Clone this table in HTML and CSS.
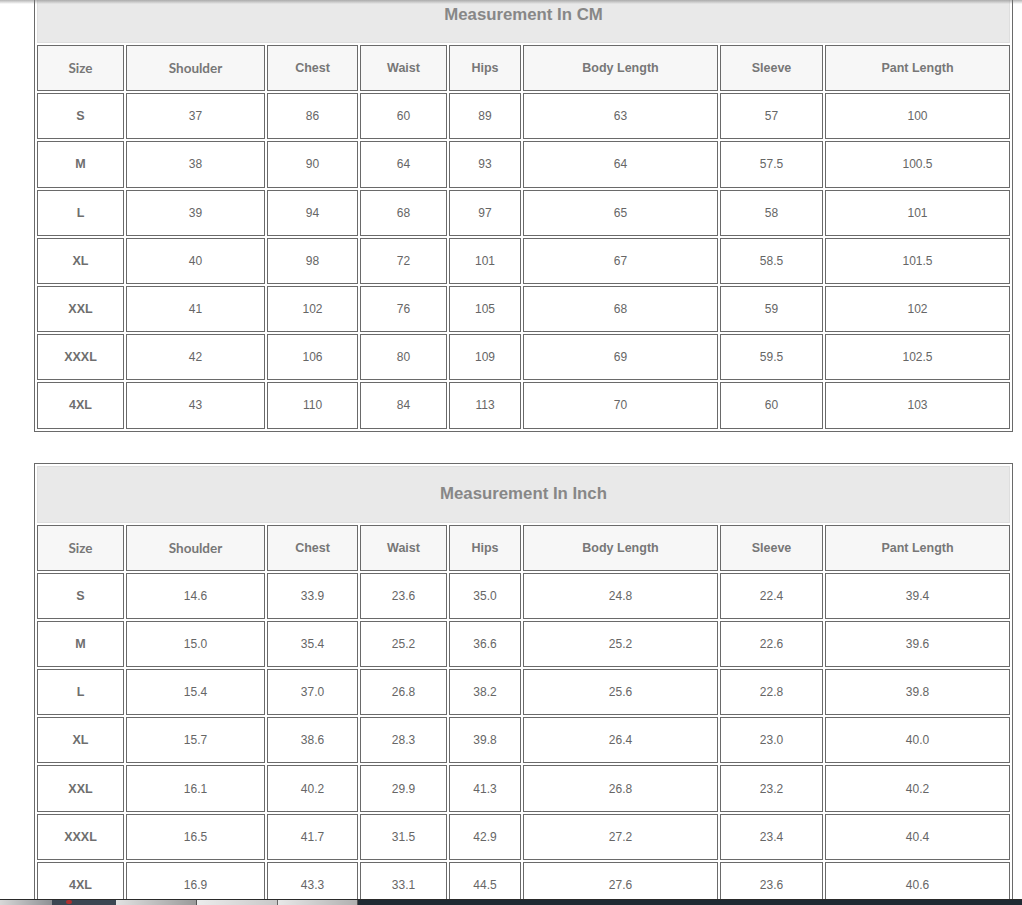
FILE: index.html
```html
<!DOCTYPE html>
<html>
<head>
<meta charset="utf-8">
<title>Size Chart</title>
<link rel="stylesheet" href="styles.css">
</head>
<body>
<div class="page">
  <table class="chart">
    <tr><td class="title" colspan="8">Measurement In CM</td></tr>
    <tr class="head">
      <th class="c-size alt">Size</th><th class="c-shoulder alt">Shoulder</th><th class="c-chest">Chest</th><th class="c-waist">Waist</th><th class="c-hips">Hips</th><th class="c-body">Body Length</th><th class="c-sleeve">Sleeve</th><th class="c-pant">Pant Length</th>
    </tr>
    <tr><td class="sz">S</td><td>37</td><td>86</td><td>60</td><td>89</td><td>63</td><td>57</td><td>100</td></tr>
    <tr><td class="sz">M</td><td>38</td><td>90</td><td>64</td><td>93</td><td>64</td><td>57.5</td><td>100.5</td></tr>
    <tr><td class="sz">L</td><td>39</td><td>94</td><td>68</td><td>97</td><td>65</td><td>58</td><td>101</td></tr>
    <tr><td class="sz">XL</td><td>40</td><td>98</td><td>72</td><td>101</td><td>67</td><td>58.5</td><td>101.5</td></tr>
    <tr><td class="sz">XXL</td><td>41</td><td>102</td><td>76</td><td>105</td><td>68</td><td>59</td><td>102</td></tr>
    <tr><td class="sz">XXXL</td><td>42</td><td>106</td><td>80</td><td>109</td><td>69</td><td>59.5</td><td>102.5</td></tr>
    <tr><td class="sz">4XL</td><td>43</td><td>110</td><td>84</td><td>113</td><td>70</td><td>60</td><td>103</td></tr>
  </table>

  <table class="chart">
    <tr><td class="title" colspan="8">Measurement In Inch</td></tr>
    <tr class="head">
      <th class="c-size alt">Size</th><th class="c-shoulder alt">Shoulder</th><th class="c-chest">Chest</th><th class="c-waist">Waist</th><th class="c-hips">Hips</th><th class="c-body">Body Length</th><th class="c-sleeve">Sleeve</th><th class="c-pant">Pant Length</th>
    </tr>
    <tr><td class="sz">S</td><td>14.6</td><td>33.9</td><td>23.6</td><td>35.0</td><td>24.8</td><td>22.4</td><td>39.4</td></tr>
    <tr><td class="sz">M</td><td>15.0</td><td>35.4</td><td>25.2</td><td>36.6</td><td>25.2</td><td>22.6</td><td>39.6</td></tr>
    <tr><td class="sz">L</td><td>15.4</td><td>37.0</td><td>26.8</td><td>38.2</td><td>25.6</td><td>22.8</td><td>39.8</td></tr>
    <tr><td class="sz">XL</td><td>15.7</td><td>38.6</td><td>28.3</td><td>39.8</td><td>26.4</td><td>23.0</td><td>40.0</td></tr>
    <tr><td class="sz">XXL</td><td>16.1</td><td>40.2</td><td>29.9</td><td>41.3</td><td>26.8</td><td>23.2</td><td>40.2</td></tr>
    <tr><td class="sz">XXXL</td><td>16.5</td><td>41.7</td><td>31.5</td><td>42.9</td><td>27.2</td><td>23.4</td><td>40.4</td></tr>
    <tr><td class="sz">4XL</td><td>16.9</td><td>43.3</td><td>33.1</td><td>44.5</td><td>27.6</td><td>23.6</td><td>40.6</td></tr>
  </table>
</div>

<div class="top-shadow"></div>
<div class="taskbar">
  <div class="tb tb1"></div>
  <div class="tb tb2"><span class="dot"></span></div>
  <div class="tb tb3"></div>
  <div class="tb tb4"></div>
  <div class="tb tb5"></div>
  <div class="tb tb6"></div>
</div>
</body>
</html>
```

FILE: styles.css
```css
html, body {
  margin: 0;
  padding: 0;
  background: #ffffff;
}

body {
  font-family: "Liberation Sans", Arial, sans-serif;
  color: #666666;
  overflow: hidden;
}

.page {
  margin-top: -17px;
  padding-left: 34px;
  display: flex;
  flex-direction: column;
  align-items: flex-start;
  gap: 31px;
}

.chart {
  width: 979px;
  table-layout: auto;
  border-collapse: separate;
  border-spacing: 2px;
  border: 1px solid #6a6a6a;
}

.chart th,
.chart td {
  box-sizing: border-box;
  border: 1px solid #6a6a6a;
  height: 46.2px;
  padding: 0;
  text-align: center;
  vertical-align: middle;
  font-size: 12px;
  color: #666666;
}

.chart .title {
  height: 57px;
  background: #e9e9e9;
  border: 1px solid #dedede;
  font-size: 16.8px;
  font-weight: bold;
  color: #878787;
}

.chart .head th {
  background: #f7f7f7;
  font-size: 12.5px;
  font-weight: bold;
  color: #777777;
}

.chart .head th.alt {
  font-family: Lato, "Liberation Sans", sans-serif;
  font-size: 13.5px;
  font-weight: bold;
}

.chart td.sz {
  font-size: 12.5px;
  font-weight: bold;
  color: #6e6e6e;
}

.chart .c-size { width: 87px; }
.chart .c-shoulder { width: 139px; }
.chart .c-chest { width: 91px; }
.chart .c-waist { width: 87px; }
.chart .c-hips { width: 72px; }
.chart .c-body { width: 195px; }
.chart .c-sleeve { width: 103px; }
.chart .c-pant { width: 185px; }

.top-shadow {
  position: fixed;
  top: 0;
  left: 0;
  right: 0;
  height: 4px;
  background: linear-gradient(to bottom, rgba(120,120,120,0.55), rgba(200,200,200,0));
}

.taskbar {
  position: fixed;
  left: 0;
  right: 0;
  bottom: 0;
  height: 5px;
  display: flex;
  border-top: 1px solid #2a2a2a;
}

.tb { height: 100%; }
.tb1 { width: 52px; background: linear-gradient(to right, #d8d8d8, #8e9094); }
.tb2 { width: 64px; background: #3b4652; position: relative; }
.tb2 .dot { position: absolute; left: 14px; top: 0; width: 6px; height: 4px; background: #b03030; border-radius: 3px; }
.tb3 { width: 80px; background: linear-gradient(to right, #e2e2e2, #9a9a9a); }
.tb4 { width: 80px; background: linear-gradient(to right, #ececec, #c8c8c8); border-left: 1px solid #555; }
.tb5 { width: 79px; background: linear-gradient(to right, #e8e8e8, #b0b0b0); border-left: 1px solid #666; }
.tb6 { flex: 1; background: #1f2a33; border-left: 1px solid #555; }
```
